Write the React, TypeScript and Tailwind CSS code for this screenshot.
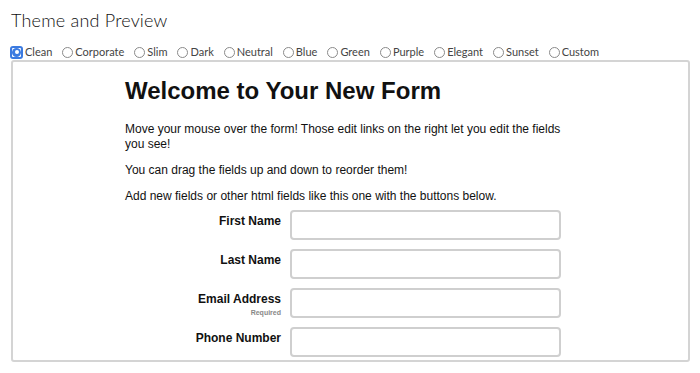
import { useState } from 'react';

const THEMES = ['Clean', 'Corporate', 'Slim', 'Dark', 'Neutral', 'Blue', 'Green', 'Purple', 'Elegant', 'Sunset', 'Custom'];

const FIELDS = [
  { label: 'First Name' },
  { label: 'Last Name' },
  { label: 'Email Address', hint: 'Required' },
  { label: 'Phone Number' },
];

function Radio({ checked }: { checked: boolean }) {
  if (checked) {
    return (
      <span className="w-[13px] h-[13px] rounded-[3px] border-2 border-[#3b7ae0] flex items-center justify-center">
        <span className="w-[9px] h-[9px] rounded-full bg-[#3b7ae0] flex items-center justify-center">
          <span className="w-[4px] h-[4px] rounded-full bg-white" />
        </span>
      </span>
    );
  }
  return <span className="w-[11px] h-[11px] rounded-full border border-[#8a8a8a] bg-white" />;
}

export default function App() {
  const [theme, setTheme] = useState('Clean');

  return (
    <div className="w-[700px] h-[373px] bg-white overflow-hidden px-[11px] pt-[7px] font-['Lato','Noto_Sans',sans-serif] text-[#222]">
      <h1 className="text-[18px] font-light text-[#111] leading-[26px] tracking-[0.2px]">Theme and Preview</h1>

      <div className="flex items-center h-[14px] mt-[12px] -ml-[1px]">
        {THEMES.map((t) => (
          <label key={t} className="flex items-center mr-[10px] cursor-pointer" onClick={() => setTheme(t)}>
            <Radio checked={theme === t} />
            <span className="ml-[2px] text-[11px] text-[#444] leading-[14px]">{t}</span>
          </label>
        ))}
      </div>

      <div className="mt-[1px] h-[302px] w-[679px] border-2 border-[#d4d4d4] rounded-[3px] overflow-hidden font-['Liberation_Sans',Arial,sans-serif] text-[#111]">
        <div className="w-[440px] ml-[112px] pt-[14px]">
          <h2 className="text-[24px] font-bold leading-[30px]">Welcome to Your New Form</h2>
          <div className="mt-[16px] text-[12px] leading-[15px]">
            <p>Move your mouse over the form! Those edit links on the right let you edit the fields you see!</p>
            <p className="mt-[11px]">You can drag the fields up and down to reorder them!</p>
            <p className="mt-[11px]">Add new fields or other html fields like this one with the buttons below.</p>
          </div>

          <div className="mt-[6px] flex flex-col gap-[9px]">
            {FIELDS.map((f) => (
              <div key={f.label} className="flex items-start">
                <div className="w-[157px] pr-[1px] text-right pt-[4px]">
                  <div className="text-[12px] font-bold leading-[15px]">{f.label}</div>
                  {f.hint && <div className="text-[7px] font-bold text-[#888] leading-[9px] mt-[1px]">{f.hint}</div>}
                </div>
                <input
                  type="text"
                  className="ml-[8px] w-[271px] h-[30px] border-2 border-[#cfcfcf] rounded-[4px] bg-white outline-none"
                />
              </div>
            ))}
          </div>
        </div>
      </div>
    </div>
  );
}
